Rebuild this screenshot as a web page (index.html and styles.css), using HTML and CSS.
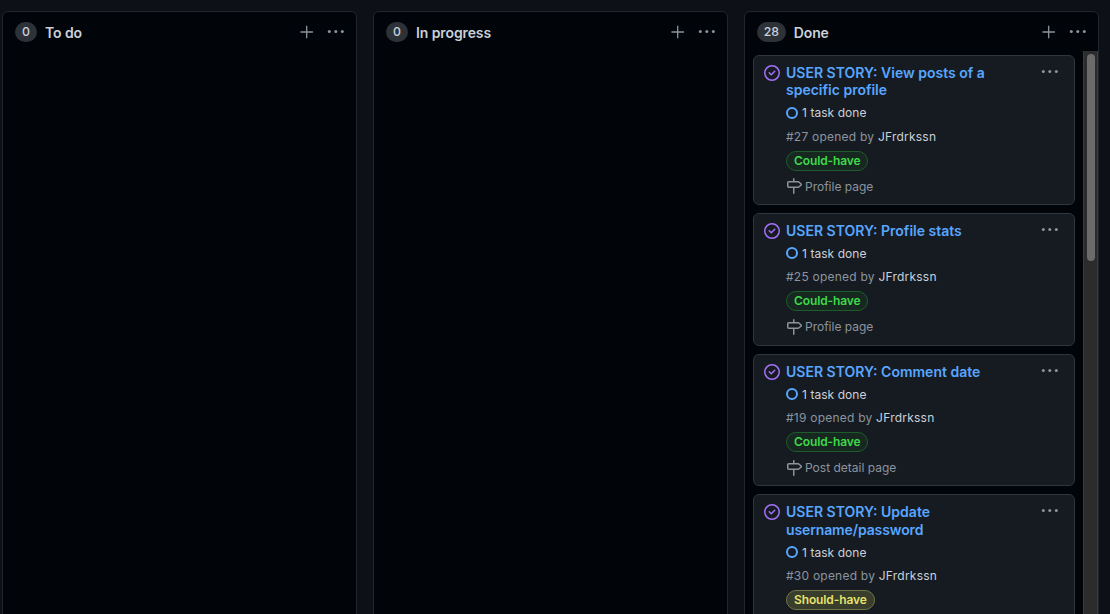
FILE: index.html
```html
<!DOCTYPE html>
<html lang="en">
<head>
<meta charset="utf-8">
<title>Project board</title>
<link rel="stylesheet" href="styles.css">
</head>
<body>
<svg class="sprite" width="0" height="0" aria-hidden="true">
  <symbol id="plus" viewBox="0 0 16 16"><path d="M7.7 2.2v11.6M1.9 8h11.6" fill="none" stroke="currentColor" stroke-width="1.3" stroke-linecap="round"/></symbol>
  <symbol id="dots" viewBox="0 0 18 4"><circle cx="2.3" cy="1.6" r="1.5"/><circle cx="8.8" cy="1.6" r="1.5"/><circle cx="15.3" cy="1.6" r="1.5"/></symbol>
  <symbol id="closed" viewBox="0 0 16 16"><path d="M11.28 6.78a.75.75 0 0 0-1.06-1.06L7.25 8.69 5.78 7.22a.75.75 0 0 0-1.06 1.06l2 2a.75.75 0 0 0 1.06 0l3.5-3.5z"/><path d="M16 8A8 8 0 1 1 0 8a8 8 0 0 1 16 0zm-1.5 0a6.5 6.5 0 1 0-13 0 6.5 6.5 0 0 0 13 0z"/></symbol>
  <symbol id="milestone" viewBox="0 0 16 16"><path d="M7.75 0a.75.75 0 0 1 .75.75V3h3.634c.414 0 .814.147 1.13.414l2.07 1.75a1.75 1.75 0 0 1 0 2.672l-2.07 1.75a1.75 1.75 0 0 1-1.13.414H8.5v5.25a.75.75 0 0 1-1.5 0V10H2.75A1.75 1.75 0 0 1 1 8.25v-3.5C1 3.784 1.784 3 2.75 3H7V.75A.75.75 0 0 1 7.75 0zm4.384 8.5a.25.25 0 0 0 .161-.06l2.07-1.75a.25.25 0 0 0 0-.38l-2.07-1.75a.25.25 0 0 0-.161-.06H2.75a.25.25 0 0 0-.25.25v3.5c0 .138.112.25.25.25h9.384z"/></symbol>
</svg>
<main class="board">
  <section class="column">
    <header class="column-header"><span class="counter">0</span><h2>To do</h2><svg class="plus"><use href="#plus"/></svg><svg class="dots"><use href="#dots"/></svg></header>
  </section>
  <section class="column">
    <header class="column-header"><span class="counter">0</span><h2>In progress</h2><svg class="plus"><use href="#plus"/></svg><svg class="dots"><use href="#dots"/></svg></header>
  </section>
  <section class="column">
    <header class="column-header"><span class="counter">28</span><h2>Done</h2><svg class="plus"><use href="#plus"/></svg><svg class="dots"><use href="#dots"/></svg></header>
    <div class="scroll-area">
      <div class="cards">
        <article class="card">
          <svg class="closed"><use href="#closed"/></svg>
          <div class="card-body">
            <h3>USER STORY: View posts of a<br>specific profile</h3>
            <p class="task"><i class="ring"></i><span>1 task done</span></p>
            <p class="meta">#27 opened by <b>JFrdrkssn</b></p>
            <span class="label could">Could-have</span>
            <p class="milestone"><svg><use href="#milestone"/></svg><span>Profile page</span></p>
          </div>
          <svg class="dots"><use href="#dots"/></svg>
        </article>
        <article class="card">
          <svg class="closed"><use href="#closed"/></svg>
          <div class="card-body">
            <h3>USER STORY: Profile stats</h3>
            <p class="task"><i class="ring"></i><span>1 task done</span></p>
            <p class="meta">#25 opened by <b>JFrdrkssn</b></p>
            <span class="label could">Could-have</span>
            <p class="milestone"><svg><use href="#milestone"/></svg><span>Profile page</span></p>
          </div>
          <svg class="dots"><use href="#dots"/></svg>
        </article>
        <article class="card">
          <svg class="closed"><use href="#closed"/></svg>
          <div class="card-body">
            <h3>USER STORY: Comment date</h3>
            <p class="task"><i class="ring"></i><span>1 task done</span></p>
            <p class="meta">#19 opened by <b>JFrdrkssn</b></p>
            <span class="label could">Could-have</span>
            <p class="milestone"><svg><use href="#milestone"/></svg><span>Post detail page</span></p>
          </div>
          <svg class="dots"><use href="#dots"/></svg>
        </article>
        <article class="card tall">
          <svg class="closed"><use href="#closed"/></svg>
          <div class="card-body">
            <h3>USER STORY: Update<br><span class="tight">username/password</span></h3>
            <p class="task"><i class="ring"></i><span>1 task done</span></p>
            <p class="meta">#30 opened by <b>JFrdrkssn</b></p>
            <span class="label should">Should-have</span>
          </div>
          <svg class="dots"><use href="#dots"/></svg>
        </article>
      </div>
      <div class="scrollbar"><div class="thumb"></div></div>
    </div>
  </section>
</main>
</body>
</html>
```
FILE: styles.css
```css
* { box-sizing: border-box; }
body { margin: 0; height: 614px; overflow: hidden; background: #0d1117; color: #c9d1d9; font-family: Inter, "Liberation Sans", sans-serif; }
h2, h3, p { margin: 0; }
svg { display: block; flex: none; fill: currentColor; }
.sprite { position: absolute; }
.board { display: flex; gap: 16px; padding: 11px 0 0 2px; height: 614px; }
.column { display: flex; flex-direction: column; flex: none; width: 355px; height: 620px; background: #010409; border: 1px solid #21262d; border-radius: 6px; }
.column-header { display: flex; align-items: center; flex: none; height: 39px; padding: 1px 11px 0 12px; color: #8b949e; }
.counter { height: 20px; min-width: 22px; padding: 0 6.7px; border-radius: 10px; background: #2d3239; color: #c9d1d9; font-size: 12.3px; line-height: 19px; font-weight: 500; text-align: center; }
h2 { flex: 1; margin-left: 8px; padding-top: 1px; color: #c9d1d9; font-size: 14px; line-height: 20px; font-weight: 600; letter-spacing: -0.1px; }
.plus { width: 16px; height: 16px; margin-right: 12px; }
.dots { width: 18px; height: 4px; }
.scroll-area { display: flex; justify-content: space-between; flex: 1; min-height: 0; }
.cards { width: 330px; padding: 4px 0 0 8px; overflow: hidden; }
.card { display: flex; width: 322px; margin-bottom: 8px; padding: 7.9px 15px 5.7px 10px; background: #161b22; border: 1px solid #30363d; border-radius: 6px; }
.tall { min-height: 150px; }
.closed { width: 16px; height: 16px; margin-top: 1.1px; color: #a371f7; }
.card-body { flex: 1; margin-left: 6px; font-size: 12px; }
.card .dots { margin-top: 6px; color: #8b949e; }
h3 { margin-bottom: 2px; color: #58a6ff; font-size: 14px; line-height: 17.5px; font-weight: 600; letter-spacing: 0; white-space: nowrap; }
.tight { letter-spacing: -0.12px; }
.task { display: flex; align-items: center; height: 24px; gap: 4px; letter-spacing: 0.06px; }
.ring { width: 12px; height: 12px; border: 2px solid #58a6ff; border-radius: 50%; }
.meta { height: 24px; line-height: 24px; color: #8b949e; letter-spacing: 0.23px; }
.meta b { color: #c9d1d9; font-weight: 400; }
.label { display: block; width: max-content; height: 20px; margin-top: 2px; padding: 0 7px; border: 1px solid; border-radius: 10px; font-weight: 600; letter-spacing: -0.12px; line-height: 18px; }
.could { background: #162820; border-color: #1e5c2c; color: #3fd94a; }
.should { background: #393d2b; border-color: #717547; color: #e5e26d; }
.milestone { display: flex; align-items: center; height: 24px; margin-top: 3.5px; gap: 3px; color: #8b949e; }
.milestone svg { width: 16px; height: 16px; }
.scrollbar { width: 15px; padding: 3px 3px 0; background: #2c2c2c; border-left: 1px solid #3b3b3b; border-right: 1px solid #3b3b3b; }
.thumb { width: 8px; height: 207px; border-radius: 4px; background: #6b6b6b; }
```
